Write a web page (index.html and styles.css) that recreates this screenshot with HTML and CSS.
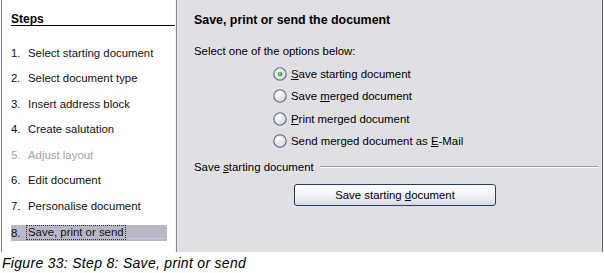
FILE: index.html
```html
<!DOCTYPE html>
<html>
<head>
<meta charset="utf-8">
<link rel="stylesheet" href="styles.css">
</head>
<body>
<div class="frame">
  <div class="steps">
    <div class="steps-head">Steps</div>
    <ol class="step-list">
      <li class="step"><span class="num">1.</span><span>Select starting document</span></li>
      <li class="step"><span class="num">2.</span><span>Select document type</span></li>
      <li class="step"><span class="num">3.</span><span>Insert address block</span></li>
      <li class="step"><span class="num">4.</span><span>Create salutation</span></li>
      <li class="step disabled"><span class="num">5.</span><span>Adjust layout</span></li>
      <li class="step"><span class="num">6.</span><span>Edit document</span></li>
      <li class="step"><span class="num">7.</span><span>Personalise document</span></li>
      <li class="step current"><span class="num">8.</span><span class="focus">Save, print or send</span><span class="tail"></span></li>
    </ol>
  </div>
  <div class="main">
    <div class="title">Save, print or send the document</div>
    <div class="prompt">Select one of the options below:</div>
    <div class="options">
      <div class="option">
        <svg class="radio" width="14" height="14" viewBox="0 0 14 14"><defs><radialGradient id="rg1" cx="0.35" cy="0.3" r="0.8"><stop offset="0" stop-color="#ffffff"/><stop offset="1" stop-color="#d0d0d8"/></radialGradient><radialGradient id="gd" cx="0.4" cy="0.4" r="0.6"><stop offset="0" stop-color="#7fe07f"/><stop offset="1" stop-color="#1f9a1f"/></radialGradient></defs><circle cx="7" cy="7" r="6.2" fill="url(#rg1)" stroke="#5d6b85" stroke-width="1.1"/><circle cx="7" cy="7" r="2.3" fill="url(#gd)"/></svg>
        <span><u>S</u>ave starting document</span>
      </div>
      <div class="option">
        <svg class="radio" width="14" height="14" viewBox="0 0 14 14"><circle cx="7" cy="7" r="6.2" fill="url(#rg1)" stroke="#5d6b85" stroke-width="1.1"/></svg>
        <span>Save <u>m</u>erged document</span>
      </div>
      <div class="option">
        <svg class="radio" width="14" height="14" viewBox="0 0 14 14"><circle cx="7" cy="7" r="6.2" fill="url(#rg1)" stroke="#5d6b85" stroke-width="1.1"/></svg>
        <span><u>P</u>rint merged document</span>
      </div>
      <div class="option">
        <svg class="radio" width="14" height="14" viewBox="0 0 14 14"><circle cx="7" cy="7" r="6.2" fill="url(#rg1)" stroke="#5d6b85" stroke-width="1.1"/></svg>
        <span>Send merged document as <u>E</u>-Mail</span>
      </div>
    </div>
    <div class="section">
      <span class="section-label">Save <u>s</u>tarting document</span>
      <span class="rule"></span>
    </div>
    <div class="btn-row">
      <button class="btn">Save starting <u>d</u>ocument</button>
    </div>
  </div>
</div>
<div class="caption">Figure 33: Step 8: Save, print or send</div>
</body>
</html>
```
FILE: styles.css
```css
html, body {
  margin: 0;
  padding: 0;
  background: #ffffff;
}
body {
  width: 604px;
  height: 273px;
  overflow: hidden;
  font-family: "Liberation Sans", Arial, sans-serif;
  font-size: 11.4px;
  color: #000;
}
.frame {
  display: flex;
  width: 601px;
  height: 252px;
  margin-left: 1px;
  border-left: 1px solid #7c7c84;
  border-right: 1px solid #5f5f78;
  padding-right: 1px;
  box-sizing: content-box;
}
.steps {
  width: 174px;
  background: #fff;
  border-right: 1px solid #8a8a92;
  box-shadow: inset -1px 0 0 #f4f4f4;
  flex: none;
}
.steps-head {
  margin: 13px 1px 0 9px;
  font-weight: bold;
  font-size: 12px;
  line-height: 12px;
  padding-bottom: 0;
  border-bottom: 1px solid #000;
}
.step-list {
  list-style: none;
  margin: 14px 0 0 0;
  padding: 0;
}
.step {
  display: flex;
  align-items: center;
  height: 25.5px;
  padding-left: 9px;
  font-size: 11.4px;
  color: #111;
}
.step .num {
  width: 17px;
  flex: none;
}
.step.disabled {
  color: #a3a3a3;
}
.step.current {
  margin-top: 6px;
  margin-left: 9px;
  padding-left: 0;
  width: 156px;
  height: 16px;
  background: #b9b8c8;
}
.step.current .num {
  width: 16px;
}
.focus {
  outline: 1px dotted #333;
  outline-offset: 0;
  padding: 0 1px;
  line-height: 13px;
}
.tail {
  flex: 1;
  margin-left: 4px;
  margin-right: 2px;
  align-self: flex-end;
  margin-bottom: 2px;
  border-bottom: 1px dotted #d8d8e4;
}
.main {
  flex: 1;
  background: #e0dfe3;
  border-right: 1px solid #5f5f78;
  padding-left: 17px;
}
.title {
  margin-top: 14px;
  font-weight: bold;
  font-size: 12.4px;
  line-height: 13px;
}
.prompt {
  margin-top: 18px;
  font-size: 11.4px;
  line-height: 13px;
}
.options {
  margin-top: 9px;
  margin-left: 79px;
  display: flex;
  flex-direction: column;
  gap: 8.3px;
}
.option {
  display: flex;
  align-items: center;
  gap: 4px;
  height: 14px;
  font-size: 11.4px;
}
.radio {
  flex: none;
}
.section {
  display: flex;
  align-items: center;
  margin-top: 13px;
  margin-right: 4px;
  font-size: 11.4px;
  height: 13px;
}
.rule {
  flex: 1;
  margin-left: 6px;
  border-top: 1px solid #a0a0a8;
  border-bottom: 1px solid #fbfbfb;
}
.btn-row {
  margin-top: 10px;
  margin-left: 100px;
}
.btn {
  width: 202px;
  height: 22px;
  border: 1px solid #1f3f66;
  border-radius: 3px;
  background: linear-gradient(#ffffff 0%, #f5f5f7 45%, #e6e6ec 80%, #d6d4e0 100%);
  font-family: "Liberation Sans", Arial, sans-serif;
  font-size: 11.4px;
  color: #000;
  padding: 0;
}
.caption {
  margin-top: 3px;
  padding-left: 2px;
  font-style: italic;
  font-size: 14px;
  letter-spacing: 0.3px;
  color: #000;
}
```
